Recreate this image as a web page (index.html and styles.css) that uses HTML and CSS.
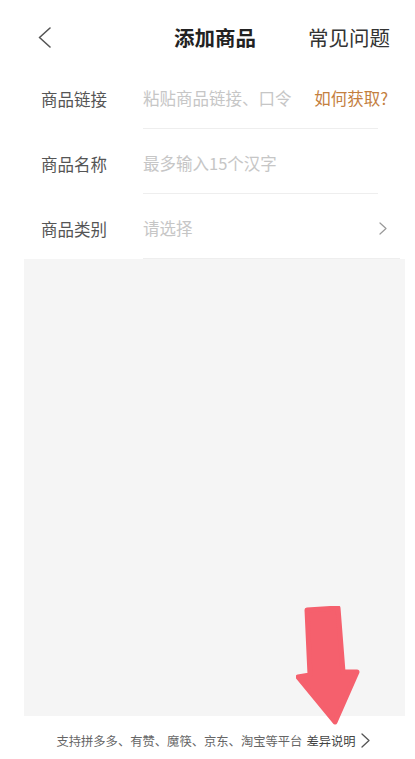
FILE: index.html
```html
<!DOCTYPE html>
<html lang="zh-CN">
<head>
<meta charset="utf-8">
<title>添加商品</title>
<link rel="stylesheet" href="styles.css">
</head>
<body>
<div class="page">
  <header class="header">
    <svg class="back" width="13" height="21" viewBox="0 0 13 21"><polyline points="12,1 1.5,10.5 12,20" fill="none" stroke="#555" stroke-width="1.6" stroke-linecap="round" stroke-linejoin="round"/></svg>
    <div class="title">添加商品</div>
    <div class="faq">常见问题</div>
  </header>
  <section class="form">
    <div class="row">
      <div class="label">商品链接</div>
      <div class="field">
        <span class="placeholder">粘贴商品链接、口令</span>
        <span class="link">如何获取?</span>
      </div>
    </div>
    <div class="row">
      <div class="label">商品名称</div>
      <div class="field">
        <span class="placeholder">最多输入15个汉字</span>
      </div>
    </div>
    <div class="row row-last">
      <div class="label">商品类别</div>
      <div class="field">
        <span class="placeholder">请选择</span>
        <svg class="chev" width="8" height="13" viewBox="0 0 8 13"><polyline points="1,1 7,6.5 1,12" fill="none" stroke="#999" stroke-width="1.2" stroke-linecap="round" stroke-linejoin="round"/></svg>
      </div>
    </div>
  </section>
  <div class="panel"></div>
  <footer class="footer">
    <span class="note">支持拼多多、有赞、魔筷、京东、淘宝等平台</span>
    <span class="diff">差异说明</span>
    <svg class="foot-chev" width="9" height="15" viewBox="0 0 9 15"><polyline points="1,1 8,7.5 1,14" fill="none" stroke="#555" stroke-width="1.3" stroke-linecap="round" stroke-linejoin="round"/></svg>
  </footer>
  <svg class="arrow" width="64" height="122" viewBox="0 0 64 122">
    <path d="M11 4 L42 2 L47 66 L61 66 L39 116 L2 71 L14 69 Z" fill="#f5606d" stroke="#f5606d" stroke-width="5" stroke-linejoin="round"/>
  </svg>
</div>
</body>
</html>
```

FILE: styles.css
```css
html, body {
  margin: 0;
  padding: 0;
  background: #ffffff;
}

body {
  font-family: "Noto Sans CJK SC", "Noto Sans", "Liberation Sans", sans-serif;
  color: #333;
}

.page {
  position: relative;
  width: 415px;
  height: 759px;
  overflow: hidden;
}

.header {
  height: 64px;
  box-sizing: border-box;
  padding: 10px 25px 0 38px;
  display: flex;
  align-items: center;
}

.back {
  display: block;
  flex: none;
}

.title {
  margin-left: 123px;
  font-size: 20.5px;
  font-weight: 700;
  color: #222;
  line-height: 1;
}

.faq {
  margin-left: auto;
  font-size: 20.5px;
  color: #333;
  line-height: 1;
}

.form {
  padding-left: 41px;
}

.row {
  display: flex;
  height: 65px;
  margin-right: 37px;
}

.row-last {
  margin-right: 15px;
}

.label {
  width: 102px;
  flex: none;
  font-size: 16.5px;
  color: #555;
  display: flex;
  align-items: center;
  padding-top: 4px;
  box-sizing: border-box;
}

.field {
  flex: 1;
  display: flex;
  align-items: center;
  padding-top: 4px;
  box-sizing: border-box;
  border-bottom: 1px solid #eeeeee;
}

.placeholder {
  font-size: 16.5px;
  color: #c6c6c6;
}

.link {
  margin-left: auto;
  margin-right: -10px;
  font-size: 16.5px;
  color: #c4803f;
}

.chev {
  margin-left: auto;
  margin-right: 13px;
  display: block;
}

.panel {
  height: 457px;
  margin: 0 10px 0 24px;
  background: #f5f5f5;
}

.footer {
  height: 43px;
  box-sizing: border-box;
  padding-top: 17px;
  padding-left: 11px;
  display: flex;
  justify-content: center;
  align-items: flex-start;
  font-size: 12.3px;
  line-height: 17px;
  color: #666;
}

.diff {
  margin-left: 4px;
  color: #444;
}

.foot-chev {
  display: block;
  margin-left: 5px;
  margin-top: 0;
}

.arrow {
  position: absolute;
  left: 296px;
  top: 606px;
}
```
